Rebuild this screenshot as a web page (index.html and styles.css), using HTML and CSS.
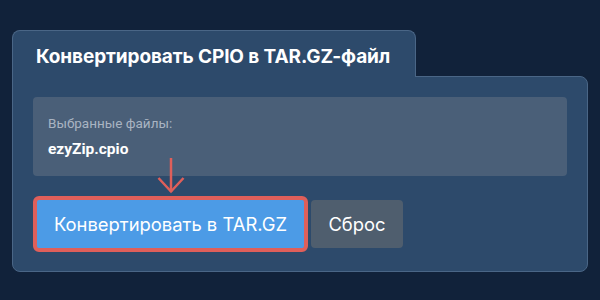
FILE: index.html
```html
<!DOCTYPE html>
<html lang="ru">
<head>
    <meta charset="UTF-8">
    <title>CPIO в TAR.GZ</title>
    <link rel="stylesheet" href="styles.css">
</head>
<body>
    <div class="wrap">
        <div class="tab">
            <h2>Конвертировать CPIO в TAR.GZ-файл</h2>
        </div>
        <div class="panel">
            <div class="files">
                <p class="files-label">Выбранные файлы:</p>
                <p class="files-name">ezyZip.cpio</p>
            </div>
            <div class="actions">
                <svg class="arrow" width="28" height="36" viewBox="0 0 28 36">
                    <line x1="14" y1="0" x2="14" y2="34" />
                    <polyline points="1.5,20 14,33.5 26.5,20" />
                </svg>
                <button class="btn btn-convert">Конвертировать в TAR.GZ</button>
                <button class="btn btn-reset">Сброс</button>
            </div>
        </div>
    </div>
</body>
</html>
```

FILE: styles.css
```css
* {
    margin: 0;
    padding: 0;
    box-sizing: border-box;
}
body {
    background: #11223a;
    font-family: Roboto, "Noto Sans", sans-serif;
    color: #fff;
}
.wrap {
    padding: 30px 12px 28px 12px;
}
.tab {
    position: relative;
    z-index: 1;
    width: 404px;
    height: 47px;
    margin-bottom: -1px;
    padding: 14px 0 0 23px;
    background: #2d4a6b;
    border: 1px solid #4a6686;
    border-bottom: none;
    border-radius: 8px 8px 0 0;
}
.tab h2 {
    font-family: Inter, Roboto, sans-serif;
    font-size: 19px;
    font-weight: 700;
    line-height: 23px;
    letter-spacing: -0.1px;
}
.panel {
    background: #2d4a6b;
    border: 1px solid #4a6686;
    border-radius: 0 8px 8px 8px;
    padding: 20px 20px 19px 20px;
}
.files {
    height: 79px;
    background: #4a5f78;
    border-radius: 4px;
    padding: 17px 15px 0 15px;
}
.files-label {
    font-size: 13.5px;
    line-height: 18px;
    color: #a9b4c2;
}
.files-name {
    margin-top: 7px;
    font-size: 15.5px;
    font-weight: 700;
    line-height: 20px;
}
.actions {
    position: relative;
    display: flex;
    align-items: center;
    gap: 3px;
    margin-top: 20px;
}
.arrow {
    position: absolute;
    left: 124px;
    top: -38px;
    fill: none;
    stroke: #df5f5a;
    stroke-width: 2.5;
}
.btn {
    font-family: Inter, Roboto, sans-serif;
    font-size: 18.4px;
    color: #fff;
    border: none;
    border-radius: 4px;
    height: 48px;
}
.btn-convert {
    width: 275px;
    height: 56px;
    background: #4c9be6;
    border: 4px solid #df5f5a;
    border-radius: 6px;
}
.btn-reset {
    width: 92px;
    background: #4f5e6e;
}
```
